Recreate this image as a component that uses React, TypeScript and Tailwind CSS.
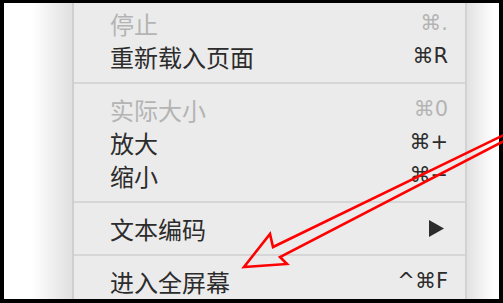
const rows: ({ type: "item"; label: string; key?: string; disabled?: boolean; submenu?: boolean } | { type: "sep" })[] = [
  { type: "item", label: "停止", key: "⌘.", disabled: true },
  { type: "item", label: "重新载入页面", key: "⌘R" },
  { type: "sep" },
  { type: "item", label: "实际大小", key: "⌘0", disabled: true },
  { type: "item", label: "放大", key: "⌘+" },
  { type: "item", label: "缩小", key: "⌘−" },
  { type: "sep" },
  { type: "item", label: "文本编码", submenu: true },
  { type: "sep" },
  { type: "item", label: "进入全屏幕", key: "^⌘F" },
];

export default function App() {
  return (
    <div className="relative w-[503px] h-[303px] overflow-hidden bg-white">
      <div className="flex w-full h-full border-black border-l-4 border-r-4 border-t-[3px] border-b-4">
        {/* window behind, left edge */}
        <div className="w-[68px] h-full bg-[linear-gradient(to_right,#ffffff_40%,#e0e0e0)]" />
        <div className="w-[2px] h-full bg-[#cfcfcf]" />

        {/* menu */}
        <div className="w-[391px] h-full bg-[#ebebeb] pt-[4px] pl-[36px] pr-[17px] font-['Noto_Sans_CJK_SC',sans-serif]">
          {rows.map((row, i) =>
            row.type === "sep" ? (
              <div key={i} className="h-[20px] -ml-[36px] -mr-[17px] flex items-center">
                <div className="w-full h-[2px] bg-[#d6d6d6]" />
              </div>
            ) : (
              <div key={i} className="h-[33px] flex items-center justify-between">
                <span
                  className={
                    row.disabled
                      ? "text-[24px] leading-none text-[#b4b4b4]"
                      : "text-[24px] leading-none text-[#2c2c2c]"
                  }
                >
                  {row.label}
                </span>
                {row.submenu ? (
                  <svg width="15" height="17" viewBox="0 0 15 17" className="mr-[4px]">
                    <polygon points="0,0 15,8.5 0,17" fill="#2c2c2c" />
                  </svg>
                ) : (
                  <span
                    className={
                      row.disabled
                        ? "text-[21px] leading-none text-[#b4b4b4] font-['DejaVu_Sans',sans-serif]"
                        : "text-[21px] leading-none text-[#2c2c2c] font-['DejaVu_Sans',sans-serif]"
                    }
                  >
                    {row.key}
                  </span>
                )}
              </div>
            )
          )}
        </div>

        <div className="w-[2px] h-full bg-[#d2d2d2]" />
        {/* window behind, right edge */}
        <div className="w-[32px] h-full bg-[linear-gradient(to_right,#e2e2e2,#ffffff_85%)]" />
      </div>

      {/* red annotation arrow */}
      <svg className="absolute top-0 left-0 pointer-events-none" width="503" height="303" viewBox="0 0 503 303">
        <polygon
          points="508,133 273,247 270,234 244,267 287,264 280,257 508,139"
          fill="none"
          stroke="#ff0000"
          strokeWidth="2.6"
          strokeLinejoin="miter"
        />
      </svg>
    </div>
  );
}
